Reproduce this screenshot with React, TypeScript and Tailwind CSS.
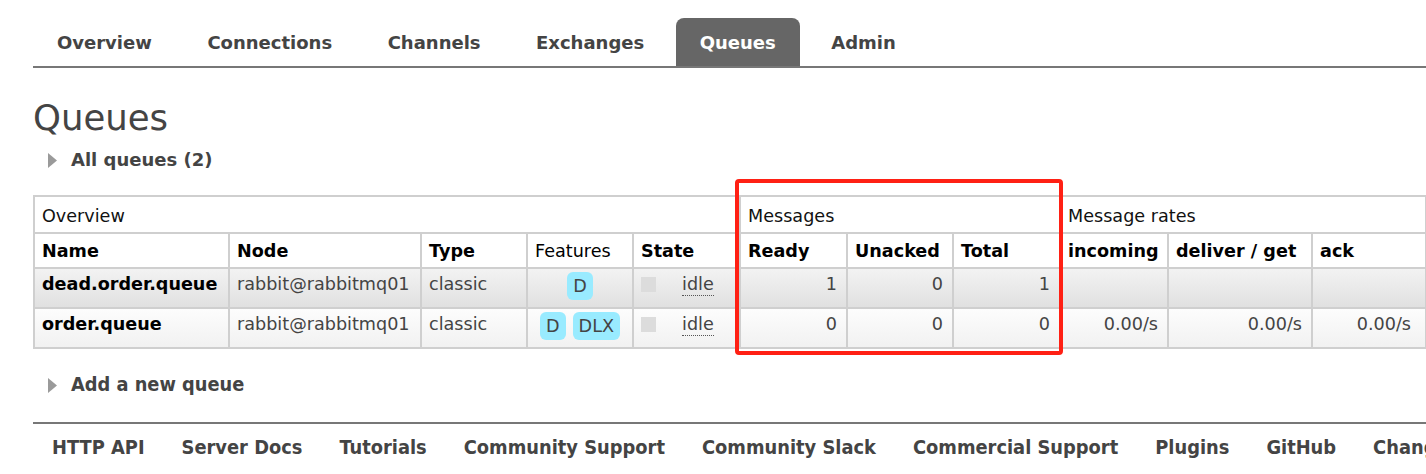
const tabs = ["Overview", "Connections", "Channels", "Exchanges", "Queues", "Admin"];
const footerLinks = [
  "HTTP API",
  "Server Docs",
  "Tutorials",
  "Community Support",
  "Community Slack",
  "Commercial Support",
  "Plugins",
  "GitHub",
  "Changelog",
];

const rows = [
  { name: "dead.order.queue", features: ["D"], ready: "1", unacked: "0", total: "1", rates: ["", "", ""], dark: true },
  { name: "order.queue", features: ["D", "DLX"], ready: "0", unacked: "0", total: "0", rates: ["0.00/s", "0.00/s", "0.00/s"], dark: false },
];

const Triangle = () => (
  <svg width="9" height="15" viewBox="0 0 9 15" className="shrink-0">
    <polygon points="0,0 9,7.5 0,15" fill="#9a9a9a" />
  </svg>
);

const cell = "border-2 border-[#cfcfcf] px-[7px]";
const dcell = "border-2 border-[#cfcfcf] px-[7px] pt-[3px] align-top";

export default function App() {
  return (
    <div className="relative h-[474px] w-[1426px] overflow-hidden bg-white font-['DejaVu_Sans',Verdana,sans-serif] text-[#444]">
      <div className="pl-[33px]">
        {/* top nav */}
        <nav className="flex gap-[7.5px] pt-[18px] border-b-2 border-[#777]">
          {tabs.map((t) => (
            <div
              key={t}
              className={
                t === "Queues"
                  ? "flex h-[48px] items-center rounded-t-[8px] bg-[#666] px-6 text-[18px] font-bold text-white"
                  : "flex h-[48px] items-center px-6 text-[18px] font-bold text-[#444]"
              }
            >
              {t}
            </div>
          ))}
        </nav>

        <h1 className="mt-[29px] text-[35.5px] leading-[42px] font-normal text-[#444]">Queues</h1>

        <div className="mt-[9px] flex h-[24px] items-center gap-[14px] pl-[15px]">
          <Triangle />
          <span className="text-[18px] leading-[24px] font-bold">All queues (2)</span>
        </div>

        {/* queue table */}
        <table className="mt-[23px] w-[1392px] table-fixed border-collapse text-[17.6px] leading-[24px]">
          <colgroup>
            <col className="w-[195px]" />
            <col className="w-[192px]" />
            <col className="w-[106px]" />
            <col className="w-[106px]" />
            <col className="w-[107px]" />
            <col className="w-[107px]" />
            <col className="w-[106px]" />
            <col className="w-[107px]" />
            <col className="w-[108px]" />
            <col className="w-[144px]" />
            <col className="w-[114px]" />
          </colgroup>
          <thead>
            <tr className="h-[37px] text-left text-[#111]">
              <th colSpan={5} className={`${cell} pt-[2px] font-normal`}>Overview</th>
              <th colSpan={3} className={`${cell} pt-[2px] font-normal`}>Messages</th>
              <th colSpan={3} className={`${cell} pt-[2px] font-normal`}>Message rates</th>
            </tr>
            <tr className="h-[35px] text-left text-black">
              <th className={cell}>Name</th>
              <th className={cell}>Node</th>
              <th className={cell}>Type</th>
              <th className={`${cell} font-normal`}>Features</th>
              <th className={cell}>State</th>
              <th className={cell}>Ready</th>
              <th className={cell}>Unacked</th>
              <th className={cell}>Total</th>
              <th className={cell}>incoming</th>
              <th className={cell}>deliver / get</th>
              <th className={cell}>ack</th>
            </tr>
          </thead>
          <tbody>
            {rows.map((r) => (
              <tr
                key={r.name}
                className={
                  r.dark
                    ? "h-[40px] bg-gradient-to-b from-[#f3f3f3] to-[#e0e0e0]"
                    : "h-[40px] bg-gradient-to-b from-[#fdfdfd] to-[#f1f1f1]"
                }
              >
                <td className={`${dcell} font-bold text-black`}>{r.name}</td>
                <td className={dcell}>rabbit@rabbitmq01</td>
                <td className={dcell}>classic</td>
                <td className={`${dcell} text-center`}>
                  <div className="flex justify-center gap-[7px]">
                    {r.features.map((f) => (
                      <span key={f} className="flex h-[28px] items-center rounded-[6px] bg-[#99ebff] px-[6px]">
                        {f}
                      </span>
                    ))}
                  </div>
                </td>
                <td className={dcell}>
                  <div className="flex h-[24px] items-center">
                    <span className="h-[15px] w-[15px] bg-[#dcdcdc]" />
                    <span className="ml-[26px] border-b border-dotted border-[#555] leading-[22px]">idle</span>
                  </div>
                </td>
                <td className={`${dcell} pr-[9px] text-right`}>{r.ready}</td>
                <td className={`${dcell} pr-[9px] text-right`}>{r.unacked}</td>
                <td className={`${dcell} pr-[9px] text-right`}>{r.total}</td>
                <td className={`${dcell} pr-[9px] text-right`}>{r.rates[0]}</td>
                <td className={`${dcell} pr-[9px] text-right`}>{r.rates[1]}</td>
                <td className={`${dcell} pr-[14px] text-right`}>{r.rates[2]}</td>
              </tr>
            ))}
          </tbody>
        </table>

        <div className="mt-[23px] flex h-[26px] items-center gap-[14px] pl-[15px]">
          <Triangle />
          <span className="font-['DejaVu_Sans_Condensed','DejaVu_Sans',sans-serif] font-stretch-condensed text-[19.8px] leading-[26px] font-bold">
            Add a new queue
          </span>
        </div>

        {/* footer */}
        <footer className="mt-[24px] border-t-2 border-[#777] pt-[11px]">
          <div className="flex gap-[37px] whitespace-nowrap pl-[19px] font-['DejaVu_Sans_Condensed','DejaVu_Sans',sans-serif] font-stretch-condensed text-[19.85px] leading-[26px] font-bold text-[#444]">
            {footerLinks.map((l) => (
              <span key={l}>{l}</span>
            ))}
          </div>
        </footer>
      </div>

      {/* annotation */}
      <div className="absolute left-[735px] top-[179px] h-[176px] w-[328px] rounded-[4px] border-4 border-[#ff2014]" />
    </div>
  );
}
